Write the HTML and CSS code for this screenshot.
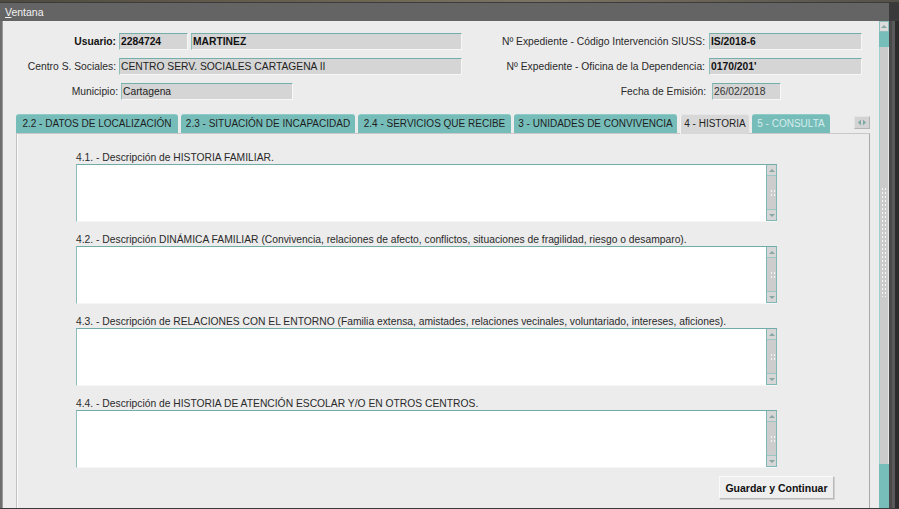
FILE: index.html
```html
<!DOCTYPE html>
<html lang="es">
<head>
    <meta charset="UTF-8">
    <title>Ventana</title>
    <link rel="stylesheet" href="styles.css">
</head>
<body>
    <div class="desk"></div>
    <div class="title"><u>V</u>entana</div>
    <div class="frame">
        <div class="edge-l"></div>
        <div class="content">
            <div class="row">
                <span class="lbl b">Usuario:</span>
                <span class="fld b w-cod">2284724</span>
                <span class="fld b w-nom">MARTINEZ</span>
                <span class="rgt">
                    <span class="lbl2">Nº Expediente - Código Intervención SIUSS:</span>
                    <span class="fld b w-exp">IS/2018-6</span>
                </span>
            </div>
            <div class="row">
                <span class="lbl">Centro S. Sociales:</span>
                <span class="fld w-centro">CENTRO SERV. SOCIALES CARTAGENA II</span>
                <span class="rgt">
                    <span class="lbl2">Nº Expediente - Oficina de la Dependencia:</span>
                    <span class="fld b w-exp">0170/201'</span>
                </span>
            </div>
            <div class="row">
                <span class="lbl lbl-mun">Municipio:</span>
                <span class="fld w-mun">Cartagena</span>
                <span class="rgt rgt-fecha">
                    <span class="lbl2 lbl-fecha">Fecha de Emisión:</span>
                    <span class="fld w-fecha">26/02/2018</span>
                </span>
            </div>

            <div class="tabs">
                <span class="tab t1">2.2 - DATOS DE LOCALIZACIÓN</span>
                <span class="tab t2">2.3 - SITUACIÓN DE INCAPACIDAD</span>
                <span class="tab t3">2.4 - SERVICIOS QUE RECIBE</span>
                <span class="tab t4">3 - UNIDADES DE CONVIVENCIA</span>
                <span class="tab t5 sel">4 - HISTORIA</span>
                <span class="tab t6 off">5 - CONSULTA</span>
                <span class="tabnav">
                    <svg width="10" height="7" viewBox="0 0 10 7"><path d="M4 0.5 L1 3.5 L4 6.5 Z M6 0.5 L9 3.5 L6 6.5 Z" fill="#7fa9a6"/></svg>
                </span>
            </div>

            <div class="panel">
                <div class="qlbl">4.1. - Descripción de HISTORIA FAMILIAR.</div>
                <div class="ta">
                    <div class="ta-body"></div>
                    <div class="sb"><span class="sb-btn up"></span><span class="sb-trk"><span class="dots"></span></span><span class="sb-btn dn"></span></div>
                </div>
                <div class="qlbl">4.2. - Descripción DINÁMICA FAMILIAR (Convivencia, relaciones de afecto, conflictos, situaciones de fragilidad, riesgo o desamparo).</div>
                <div class="ta">
                    <div class="ta-body"></div>
                    <div class="sb"><span class="sb-btn up"></span><span class="sb-trk"><span class="dots"></span></span><span class="sb-btn dn"></span></div>
                </div>
                <div class="qlbl">4.3. - Descripción de RELACIONES CON EL ENTORNO (Familia extensa, amistades, relaciones vecinales, voluntariado, intereses, aficiones).</div>
                <div class="ta">
                    <div class="ta-body"></div>
                    <div class="sb"><span class="sb-btn up"></span><span class="sb-trk"><span class="dots"></span></span><span class="sb-btn dn"></span></div>
                </div>
                <div class="qlbl">4.4. - Descripción de HISTORIA DE ATENCIÓN ESCOLAR Y/O EN OTROS CENTROS.</div>
                <div class="ta">
                    <div class="ta-body"></div>
                    <div class="sb"><span class="sb-btn up"></span><span class="sb-trk"><span class="dots"></span></span><span class="sb-btn dn"></span></div>
                </div>
                <div class="actions">
                    <button class="btn">Guardar y Continuar</button>
                </div>
            </div>
        </div>
        <div class="vsb">
            <span class="vsb-btn up"></span>
            <span class="vsb-trk1"></span>
            <span class="vsb-thumb"><span class="grip"></span></span>
            <span class="vsb-trk2"></span>
        </div>
        <div class="edge-r"></div>
    </div>
</body>
</html>
```

FILE: styles.css
```css
*{
    margin: 0;
    padding: 0;
    box-sizing: border-box;
}
body{
    width: 899px;
    height: 509px;
    overflow: hidden;
    background-color: #3a3a3a;
    font-family: "Liberation Sans", Arial, sans-serif;
    font-size: 10.3px;
    color: #222;
}
.desk{
    height: 3px;
    background: linear-gradient(90deg, #4e4a40, #6b6552 40%, #7a7462 60%, #55504a);
    border-bottom: 1px solid #3c3c3c;
}
.title{
    height: 18px;
    width: 889px;
    background-color: #646464;
    color: #f2f2f2;
    padding-left: 5px;
    line-height: 18px;
    font-size: 10.5px;
}
.title u{
    text-decoration-thickness: 1px;
}
.frame{
    display: flex;
    height: 487px;
}
.edge-l{
    width: 3px;
    background-color: #6e6e6e;
    border-right: 1px solid #9a9a9a;
}
.content{
    width: 876px;
    background-color: #ececec;
    padding-top: 12px;
}
.row{
    display: flex;
    height: 17px;
    margin-bottom: 8px;
    align-items: center;
}
.lbl{
    width: 116px;
    padding-right: 3px;
    text-align: right;
    color: #2a2a2a;
}
.lbl-mun{
    width: 118px;
}
.b{
    font-weight: bold;
    color: #111;
}
.fld{
    height: 17px;
    line-height: 15px;
    background-color: #d5d5d5;
    border-top: 1px solid #74aeab;
    border-left: 1px solid #8dbcb9;
    border-right: 1px solid #f7f7f7;
    border-bottom: 1px solid #f7f7f7;
    padding-left: 1px;
    white-space: nowrap;
    overflow: hidden;
}
.w-cod{ width: 69px; margin-right: 3px; }
.w-nom{ width: 271px; }
.w-centro{ width: 343px; }
.w-mun{ width: 172px; }
.w-exp{ width: 153px; }
.w-fecha{ width: 69px; color: #333; }
.rgt{
    margin-left: auto;
    margin-right: 17px;
    display: flex;
    align-items: center;
}
.rgt-fecha{
    margin-right: 98px;
}
.lbl2{
    padding-right: 4px;
    color: #2a2a2a;
}
.lbl-fecha{
    padding-right: 6px;
}

.tabs{
    display: flex;
    gap: 3px;
    margin-top: 14px;
    margin-left: 13px;
    width: 854px;
    height: 19px;
}
.tab{
    height: 19px;
    line-height: 18px;
    text-align: center;
    font-size: 10px;
    background-color: #76bdba;
    border-top: 1px solid #8ecbc8;
    border-radius: 3px 3px 0 0;
    color: #1e1e1e;
    white-space: nowrap;
    overflow: hidden;
}
.t1{ width: 162px; }
.t2{ width: 174px; }
.t3{ width: 153px; }
.t4{ width: 163px; }
.t5{ width: 69px; }
.t6{ width: 78px; }
.tab.sel{
    background-color: #d8d8d8;
    border-top: 1px solid #e6e6e6;
    border-left: 1px solid #f4f4f4;
    height: 20px;
    color: #222;
}
.tab.off{
    color: #d4ecea;
}
.tabnav{
    margin-left: auto;
    margin-top: 2px;
    width: 16px;
    height: 13px;
    background-color: #d3d3d3;
    border: 1px solid #e4e4e4;
    border-right-color: #b4b4b4;
    border-bottom-color: #b4b4b4;
    display: flex;
    align-items: center;
    justify-content: center;
}

.panel{
    margin-left: 13px;
    width: 854px;
    height: 375px;
    border-left: 1px solid #c2c2c2;
    border-top: 1px solid #c8c8c8;
    border-right: 1px solid #a9a9a9;
    box-shadow: inset 1px 0 0 #fafafa;
    padding-top: 17px;
    padding-left: 59px;
}
.qlbl{
    height: 13px;
    line-height: 13px;
    color: #2a2a2a;
    white-space: nowrap;
}
.ta{
    display: flex;
    width: 701px;
    height: 58px;
    margin-bottom: 11px;
    border-top: 1px solid #72aca9;
    border-left: 1px solid #8dbcb9;
    border-bottom: 1px solid #f6f6f6;
}
.ta-body{
    flex: 1;
    background-color: #fff;
}
.sb{
    width: 11px;
    display: flex;
    flex-direction: column;
    background-color: #cdcdcd;
    border: 1px solid #80b8b5;
    border-top: 0;
}
.sb-btn{
    height: 11px;
    background-color: #d6d6d6;
    border-bottom: 1px solid #9cc6c3;
    display: flex;
    align-items: center;
    justify-content: center;
}
.sb-btn.dn{
    border-bottom: 0;
    border-top: 1px solid #9cc6c3;
}
.up::before, .dn::before{
    content: "";
    border-left: 3px solid transparent;
    border-right: 3px solid transparent;
}
.up::before{
    border-bottom: 3px solid #8aa6a4;
}
.dn::before{
    border-top: 3px solid #8aa6a4;
}
.sb-trk{
    flex: 1;
    display: flex;
    align-items: center;
    justify-content: flex-end;
    padding-right: 1px;
}
.dots{
    width: 5px;
    height: 8px;
    background-image: radial-gradient(circle, #f6f6f6 0.8px, transparent 1px);
    background-size: 3px 4px;
}
.actions{
    display: flex;
    justify-content: flex-end;
    padding-right: 35px;
    margin-top: -3px;
}
.btn{
    width: 115px;
    height: 23px;
    font-family: "Liberation Sans", Arial, sans-serif;
    font-size: 10.5px;
    font-weight: bold;
    color: #111;
    background-color: #eeeeee;
    border: 1px solid #fafafa;
    border-right-color: #b9b9b9;
    border-bottom-color: #b9b9b9;
    box-shadow: 1px 1px 0 #d0d0d0;
}

.vsb{
    width: 10px;
    display: flex;
    flex-direction: column;
    background-color: #ececec;
}
.vsb-btn{
    height: 11px;
    background-color: #dcdcdc;
    border: 1px solid #8dc0bd;
    display: flex;
    align-items: center;
    justify-content: center;
}
.vsb-trk1{
    height: 15px;
    background-color: #77bdba;
}
.vsb-thumb{
    height: 417px;
    background-color: #cbcbcb;
    border-left: 1px solid #9fcfcc;
    border-right: 1px solid #e4e4e4;
    padding-top: 140px;
    padding-left: 1px;
}
.grip{
    display: block;
    width: 6px;
    height: 110px;
    background-image: radial-gradient(circle, #f6f6f6 0.8px, transparent 1px);
    background-size: 3px 4px;
}
.vsb-trk2{
    flex: 1;
    background-color: #77bdba;
}
.edge-r{
    width: 10px;
    background: linear-gradient(90deg, #4a4a4a 0, #4a4a4a 3px, #5a5a5a 3px, #5a5a5a 6px, #2c2c2c 6px);
}
```
